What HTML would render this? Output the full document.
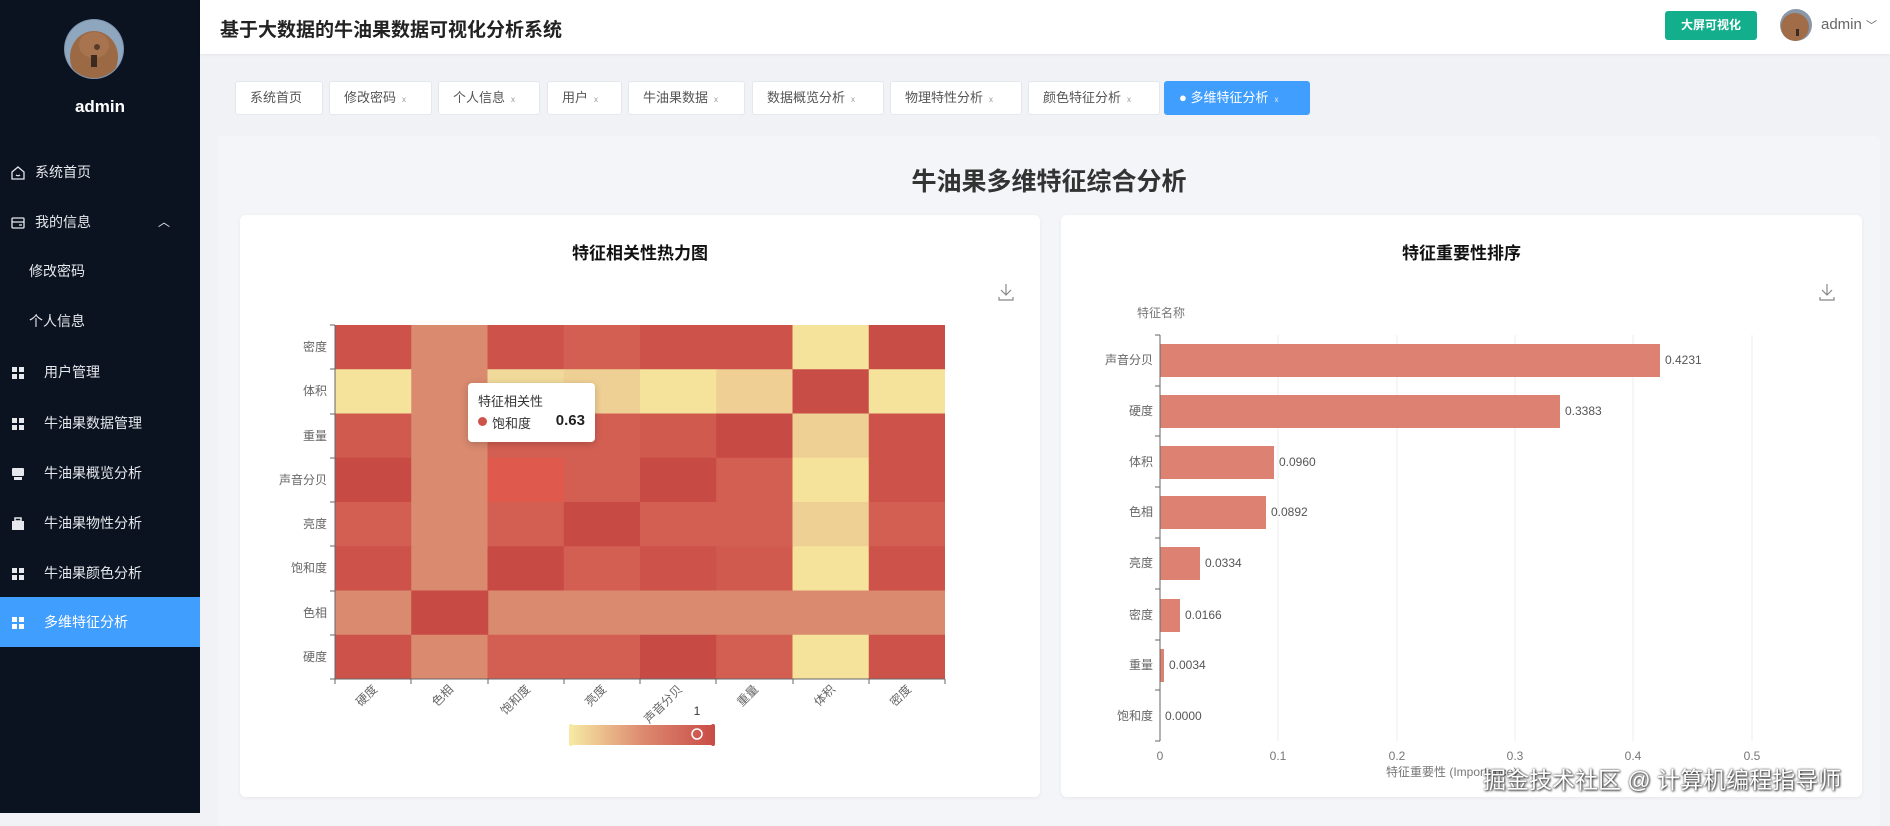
<!DOCTYPE html>
<html><head><meta charset="utf-8"><style>
*{margin:0;padding:0;box-sizing:border-box}
body{width:1890px;height:813px;overflow:hidden;background:#f0f2f5;font-family:"Liberation Sans","Noto Sans CJK SC",sans-serif;position:relative}
.abs{position:absolute}
#side{left:0;top:0;width:200px;height:813px;background:#0b1220}
.mi{position:absolute;left:0;width:200px;height:50px;line-height:50px;color:#e6e8ec;font-size:14px}
.mi svg{position:absolute;left:10px;top:18px}
.mi span{position:absolute;left:44px}
#hdr{left:200px;top:0;width:1690px;height:54px;background:#fff;box-shadow:0 1px 3px rgba(0,0,0,.06)}
.tab{position:absolute;top:81px;height:34px;line-height:32px;background:#fff;border:1px solid #e4e7ed;border-radius:3px;font-size:13px;color:#555;padding-left:14px}
.tab i{font-style:normal;font-size:8px;color:#999;margin-left:6px}
.card{position:absolute;top:215px;height:582px;background:#fff;border-radius:6px;box-shadow:0 1px 4px rgba(0,0,0,.06)}
</style></head><body>
<div id="side" class="abs">
 <svg class="abs" style="left:64px;top:19px" width="60" height="60" viewBox="0 0 60 60"><defs><clipPath id="c"><circle cx="30" cy="30" r="29"/></clipPath></defs><circle cx="30" cy="30" r="30" fill="#7d93ad"/><g clip-path="url(#c)"><rect width="60" height="60" fill="#8fa6bf"/><ellipse cx="30" cy="38" rx="24" ry="26" fill="#9b6a45"/><ellipse cx="30" cy="26" rx="15" ry="13" fill="#a87450"/><rect x="27" y="36" width="6" height="12" fill="#3a2a20"/><circle cx="33" cy="28" r="3" fill="#5a3a28"/></g></svg>
 <div class="abs" style="left:0;width:200px;top:97px;text-align:center;color:#fff;font-size:17px;font-weight:bold">admin</div>
 <div class="mi" style="top:147px"><svg width="16" height="16" viewBox="0 0 16 16" fill="none" stroke="#e6e8ec" stroke-width="1.3"><path d="M2 7L8 2l6 5v7H2z"/><path d="M6 10q2 1.5 4 0"/></svg><span style="left:35px">系统首页</span></div>
 <div class="mi" style="top:197px"><svg width="16" height="16" viewBox="0 0 16 16" fill="none" stroke="#e6e8ec" stroke-width="1.3"><rect x="2" y="3" width="12" height="10" rx="1"/><path d="M2 7h12M9 10h3"/></svg><span style="left:35px">我的信息</span><span style="left:158px;font-size:12px">︿</span></div>
 <div class="mi" style="top:246px"><span style="left:29px">修改密码</span></div>
 <div class="mi" style="top:296px"><span style="left:29px">个人信息</span></div>
 <div class="mi" style="top:347px"><svg width="16" height="16" viewBox="0 0 16 16" fill="#e6e8ec"><rect x="2" y="2" width="5" height="5"/><rect x="9" y="2" width="5" height="5"/><rect x="2" y="9" width="5" height="5"/><rect x="9" y="9" width="5" height="5"/></svg><span>用户管理</span></div>
 <div class="mi" style="top:398px"><svg width="16" height="16" viewBox="0 0 16 16" fill="#e6e8ec"><rect x="2" y="2" width="5" height="5"/><rect x="9" y="2" width="5" height="5"/><rect x="2" y="9" width="5" height="5"/><rect x="9" y="9" width="5" height="5"/></svg><span>牛油果数据管理</span></div>
 <div class="mi" style="top:448px"><svg width="16" height="16" viewBox="0 0 16 16" fill="#e6e8ec"><rect x="2" y="2" width="12" height="8" rx="1"/><rect x="4" y="11" width="8" height="3"/></svg><span>牛油果概览分析</span></div>
 <div class="mi" style="top:498px"><svg width="16" height="16" viewBox="0 0 16 16" fill="#e6e8ec"><rect x="5" y="2" width="6" height="3" fill="none" stroke="#e6e8ec" stroke-width="1.5"/><rect x="2" y="5" width="12" height="9"/></svg><span>牛油果物性分析</span></div>
 <div class="mi" style="top:548px"><svg width="16" height="16" viewBox="0 0 16 16" fill="#e6e8ec"><rect x="2" y="2" width="5" height="5"/><rect x="9" y="2" width="5" height="5"/><rect x="2" y="9" width="5" height="5"/><rect x="9" y="9" width="5" height="5"/></svg><span>牛油果颜色分析</span></div>
 <div class="mi" style="top:597px;background:#409eff;color:#fff"><svg width="16" height="16" viewBox="0 0 16 16" fill="#fff"><rect x="2" y="2" width="5" height="5"/><rect x="9" y="2" width="5" height="5"/><rect x="2" y="9" width="5" height="5"/><rect x="9" y="9" width="5" height="5"/></svg><span>多维特征分析</span></div>
</div>
<div id="hdr" class="abs">
 <div class="abs" style="left:20px;top:15px;font-size:19px;font-weight:bold;color:#222">基于大数据的牛油果数据可视化分析系统</div>
 <div class="abs" style="left:1465px;top:11px;width:92px;height:29px;background:#13ae8c;border-radius:3px;color:#fff;font-size:12px;font-weight:bold;text-align:center;line-height:29px">大屏可视化</div>
 <svg class="abs" style="left:1580px;top:9px" width="32" height="32" viewBox="0 0 32 32"><circle cx="16" cy="16" r="16" fill="#8a97a8"/><circle cx="15" cy="18" r="14" fill="#a06d48"/><rect x="16" y="20" width="3" height="7" fill="#3a2a20"/></svg>
 <div class="abs" style="left:1621px;top:16px;font-size:15px;color:#666">admin <span style="font-size:11px">﹀</span></div>
</div>
<div class="tab" style="left:235px;width:88px">系统首页</div>
<div class="tab" style="left:329px;width:103px">修改密码<i>x</i></div>
<div class="tab" style="left:438px;width:102px">个人信息<i>x</i></div>
<div class="tab" style="left:547px;width:75px">用户<i>x</i></div>
<div class="tab" style="left:628px;width:117px">牛油果数据<i>x</i></div>
<div class="tab" style="left:752px;width:132px">数据概览分析<i>x</i></div>
<div class="tab" style="left:890px;width:132px">物理特性分析<i>x</i></div>
<div class="tab" style="left:1028px;width:132px">颜色特征分析<i>x</i></div>
<div class="tab" style="left:1164px;width:146px;background:#409eff;border-color:#409eff;color:#fff">● 多维特征分析<i style="color:#dbeaff">x</i></div>
<div class="abs" style="left:218px;top:136px;width:1662px;height:690px;background:#f4f5f8;border-radius:4px"></div>
<div class="abs" style="left:218px;top:162px;width:1662px;text-align:center;font-size:25px;font-weight:bold;color:#333">牛油果多维特征综合分析</div>
<div class="card" style="left:240px;width:800px"></div>
<div class="card" style="left:1061px;width:801px"></div>
<div class="abs" style="left:240px;width:800px;top:239px;text-align:center;font-size:17px;font-weight:bold;color:#111">特征相关性热力图</div>
<div class="abs" style="left:1061px;width:801px;top:239px;text-align:center;font-size:17px;font-weight:bold;color:#111">特征重要性排序</div>
<svg class="abs" style="left:0;top:0" width="1890" height="813" font-family="Liberation Sans, Noto Sans CJK SC, sans-serif">
 <g fill="none" stroke="#888" stroke-width="1.2"><path d="M1006 284v11M1001 290l5 5 5-5M999 297v3h14v-3"/><path d="M1827 284v11M1822 290l5 5 5-5M1820 297v3h14v-3"/></g>
 <g id="hm">
 <!-- row0 -->
 <rect x="335" y="325" width="77" height="45" fill="#cd5249"/><rect x="411.25" y="325" width="77" height="45" fill="#d98a6f"/><rect x="487.5" y="325" width="77" height="45" fill="#cd5249"/><rect x="563.75" y="325" width="77" height="45" fill="#d35f52"/><rect x="640" y="325" width="77" height="45" fill="#cd5249"/><rect x="716.25" y="325" width="77" height="45" fill="#cd5249"/><rect x="792.5" y="325" width="77" height="45" fill="#f5e39c"/><rect x="868.75" y="325" width="76.25" height="45" fill="#c94d47"/>
 <!-- row1 -->
 <rect x="335" y="369.25" width="77" height="45" fill="#f5e39c"/><rect x="411.25" y="369.25" width="77" height="45" fill="#d98a6f"/><rect x="487.5" y="369.25" width="77" height="45" fill="#f0d99a"/><rect x="563.75" y="369.25" width="77" height="45" fill="#efd094"/><rect x="640" y="369.25" width="77" height="45" fill="#f5e39c"/><rect x="716.25" y="369.25" width="77" height="45" fill="#efcf93"/><rect x="792.5" y="369.25" width="77" height="45" fill="#c94d47"/><rect x="868.75" y="369.25" width="76.25" height="45" fill="#f5e39c"/>
 <!-- row2 -->
 <rect x="335" y="413.5" width="77" height="45" fill="#d05a4e"/><rect x="411.25" y="413.5" width="77" height="45" fill="#d98a6f"/><rect x="487.5" y="413.5" width="77" height="45" fill="#d35f52"/><rect x="563.75" y="413.5" width="77" height="45" fill="#d35f52"/><rect x="640" y="413.5" width="77" height="45" fill="#d05a4e"/><rect x="716.25" y="413.5" width="77" height="45" fill="#c84a45"/><rect x="792.5" y="413.5" width="77" height="45" fill="#efd094"/><rect x="868.75" y="413.5" width="76.25" height="45" fill="#cd5249"/>
 <!-- row3 -->
 <rect x="335" y="457.75" width="77" height="45" fill="#c84a45"/><rect x="411.25" y="457.75" width="77" height="45" fill="#d98a6f"/><rect x="487.5" y="457.75" width="77" height="45" fill="#e0594d"/><rect x="563.75" y="457.75" width="77" height="45" fill="#d35f52"/><rect x="640" y="457.75" width="77" height="45" fill="#c84a45"/><rect x="716.25" y="457.75" width="77" height="45" fill="#d35f52"/><rect x="792.5" y="457.75" width="77" height="45" fill="#f5e39c"/><rect x="868.75" y="457.75" width="76.25" height="45" fill="#cd5249"/>
 <!-- row4 -->
 <rect x="335" y="502" width="77" height="45" fill="#d35f52"/><rect x="411.25" y="502" width="77" height="45" fill="#d98a6f"/><rect x="487.5" y="502" width="77" height="45" fill="#d35f52"/><rect x="563.75" y="502" width="77" height="45" fill="#c84a45"/><rect x="640" y="502" width="77" height="45" fill="#d35f52"/><rect x="716.25" y="502" width="77" height="45" fill="#d35f52"/><rect x="792.5" y="502" width="77" height="45" fill="#efd094"/><rect x="868.75" y="502" width="76.25" height="45" fill="#d35f52"/>
 <!-- row5 -->
 <rect x="335" y="546.25" width="77" height="45" fill="#cd5249"/><rect x="411.25" y="546.25" width="77" height="45" fill="#d98a6f"/><rect x="487.5" y="546.25" width="77" height="45" fill="#c84a45"/><rect x="563.75" y="546.25" width="77" height="45" fill="#d35f52"/><rect x="640" y="546.25" width="77" height="45" fill="#cd5249"/><rect x="716.25" y="546.25" width="77" height="45" fill="#d05a4e"/><rect x="792.5" y="546.25" width="77" height="45" fill="#f5e39c"/><rect x="868.75" y="546.25" width="76.25" height="45" fill="#cd5249"/>
 <!-- row6 -->
 <rect x="335" y="590.5" width="610" height="45" fill="#d98a6f"/><rect x="411.25" y="590.5" width="77" height="45" fill="#c84a45"/>
 <!-- row7 -->
 <rect x="335" y="634.75" width="77" height="44.25" fill="#cd5249"/><rect x="411.25" y="634.75" width="77" height="44.25" fill="#d98a6f"/><rect x="487.5" y="634.75" width="77" height="44.25" fill="#d35f52"/><rect x="563.75" y="634.75" width="77" height="44.25" fill="#d35f52"/><rect x="640" y="634.75" width="77" height="44.25" fill="#c84a45"/><rect x="716.25" y="634.75" width="77" height="44.25" fill="#d35f52"/><rect x="792.5" y="634.75" width="77" height="44.25" fill="#f5e39c"/><rect x="868.75" y="634.75" width="76.25" height="44.25" fill="#cd5249"/>
 </g>
 <path d="M335 325V679H945" fill="none" stroke="#666" stroke-width="1"/>
 <g stroke="#666"><path d="M330 325h5M330 369h5M330 414h5M330 458h5M330 502h5M330 546h5M330 591h5M330 635h5M330 679h5"/><path d="M335 679v5M411 679v5M488 679v5M564 679v5M640 679v5M716 679v5M793 679v5M869 679v5M945 679v5"/></g>
 <g font-size="12" fill="#666" text-anchor="end"><text x="327" y="351">密度</text><text x="327" y="395">体积</text><text x="327" y="440">重量</text><text x="327" y="484">声音分贝</text><text x="327" y="528">亮度</text><text x="327" y="572">饱和度</text><text x="327" y="617">色相</text><text x="327" y="661">硬度</text></g>
 <g font-size="12" fill="#666" text-anchor="end">
 <text transform="translate(378,690) rotate(-45)">硬度</text><text transform="translate(454,690) rotate(-45)">色相</text><text transform="translate(531,690) rotate(-45)">饱和度</text><text transform="translate(607,690) rotate(-45)">亮度</text><text transform="translate(683,690) rotate(-45)">声音分贝</text><text transform="translate(759,690) rotate(-45)">重量</text><text transform="translate(836,690) rotate(-45)">体积</text><text transform="translate(912,690) rotate(-45)">密度</text></g>
 <defs><linearGradient id="vg"><stop offset="0" stop-color="#f6e8a2"/><stop offset=".5" stop-color="#dd8a70"/><stop offset="1" stop-color="#c94d47"/></linearGradient></defs>
 <rect x="571" y="725" width="143" height="20" fill="url(#vg)"/>
 <rect x="569" y="724" width="4" height="22" rx="2" fill="#f6e8a2"/><rect x="711" y="724" width="4" height="22" rx="2" fill="#c94d47"/>
 <circle cx="697" cy="734" r="5" fill="none" stroke="#fff" stroke-width="1.5"/>
 <text x="697" y="715" font-size="12" fill="#333" text-anchor="middle">1</text>
 <!-- right chart -->
 <g stroke="#eee"><path d="M1278 335V741M1397 335V741M1515 335V741M1633 335V741M1752 335V741"/></g>
 <g fill="#dd8273"><rect x="1160" y="344" width="500" height="33"/><rect x="1160" y="395" width="400" height="33"/><rect x="1160" y="446" width="114" height="33"/><rect x="1160" y="496" width="106" height="33"/><rect x="1160" y="547" width="40" height="33"/><rect x="1160" y="599" width="20" height="33"/><rect x="1160" y="649" width="4" height="33"/></g>
 <path d="M1160 335V741" stroke="#666"/>
 <g stroke="#666"><path d="M1155 335h5M1155 386h5M1155 436h5M1155 487h5M1155 538h5M1155 589h5M1155 640h5M1155 690h5M1155 741h5"/></g>
 <g font-size="12" fill="#555"><text x="1665" y="364">0.4231</text><text x="1565" y="415">0.3383</text><text x="1279" y="466">0.0960</text><text x="1271" y="516">0.0892</text><text x="1205" y="567">0.0334</text><text x="1185" y="619">0.0166</text><text x="1169" y="669">0.0034</text><text x="1165" y="720">0.0000</text></g>
 <g font-size="12" fill="#666" text-anchor="end"><text x="1153" y="364">声音分贝</text><text x="1153" y="415">硬度</text><text x="1153" y="466">体积</text><text x="1153" y="516">色相</text><text x="1153" y="567">亮度</text><text x="1153" y="619">密度</text><text x="1153" y="669">重量</text><text x="1153" y="720">饱和度</text></g>
 <text x="1137" y="317" font-size="12" fill="#777">特征名称</text>
 <g font-size="12" fill="#777" text-anchor="middle"><text x="1160" y="760">0</text><text x="1278" y="760">0.1</text><text x="1397" y="760">0.2</text><text x="1515" y="760">0.3</text><text x="1633" y="760">0.4</text><text x="1752" y="760">0.5</text></g>
 <text x="1386" y="776" font-size="12" fill="#777">特征重要性 (Importance)</text>
</svg>
<div class="abs" style="left:468px;top:383px;width:127px;height:59px;background:#fff;border-radius:4px;box-shadow:0 2px 8px rgba(0,0,0,.2)">
 <div class="abs" style="left:10px;top:8px;font-size:13px;color:#333">特征相关性</div>
 <div class="abs" style="left:10px;top:34px;width:9px;height:9px;border-radius:50%;background:#cd5249"></div>
 <div class="abs" style="left:24px;top:30px;font-size:13px;color:#333">饱和度</div>
 <div class="abs" style="right:10px;top:29px;font-size:15px;font-weight:bold;color:#222">0.63</div>
</div>
<div class="abs" style="left:1483px;top:761px;font-size:23px;color:#fff;text-shadow:0 0 2px #333,1px 1px 2px #333;white-space:nowrap">掘金技术社区 @ 计算机编程指导师</div>
</body></html>
